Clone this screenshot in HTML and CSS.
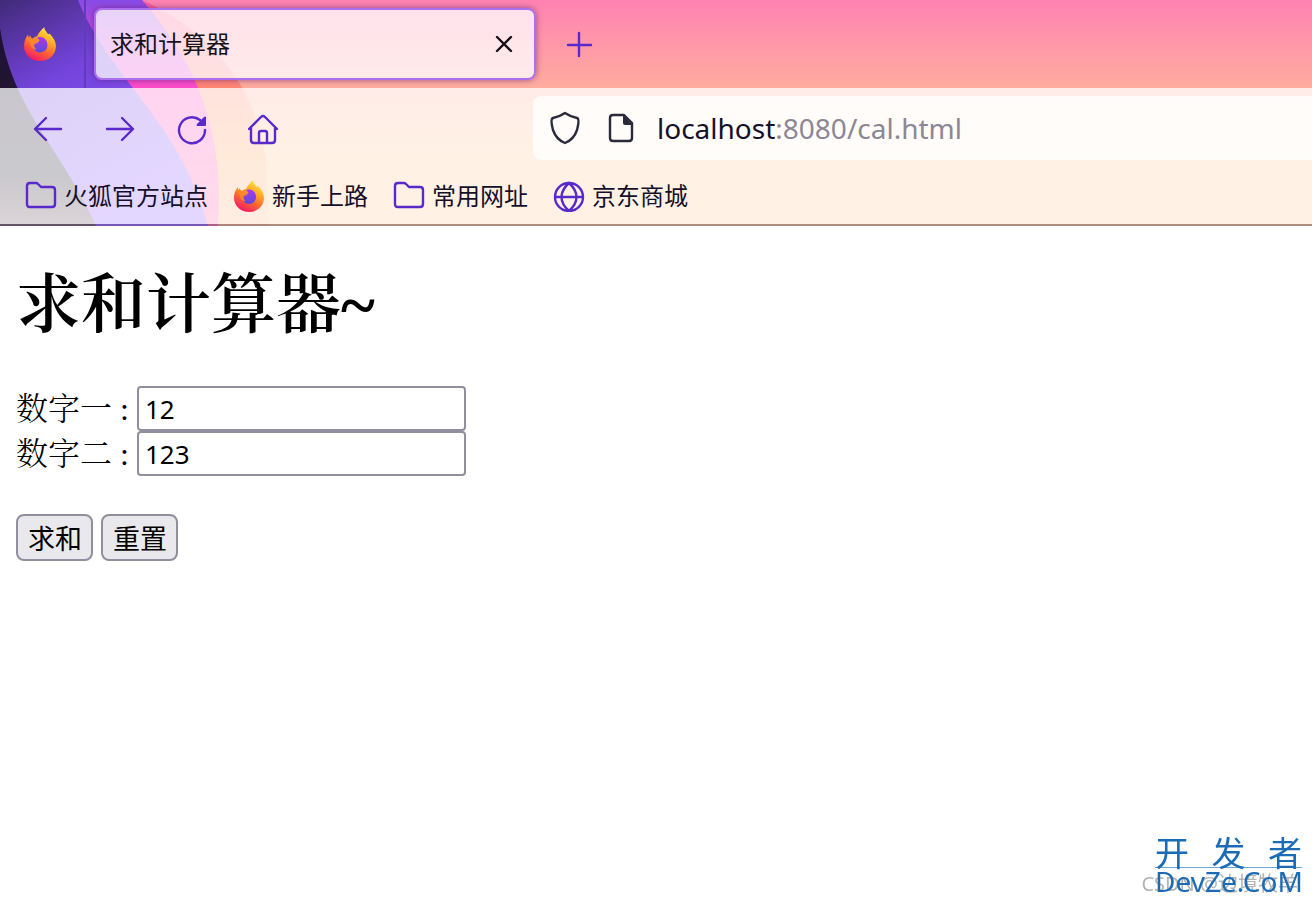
FILE: index.html
```html
<!DOCTYPE html>
<html lang="zh-CN">
<head>
<meta charset="utf-8">
<title>求和计算器</title>
<link rel="stylesheet" href="styles.css">
</head>
<body>
<svg class="defs" width="0" height="0" aria-hidden="true">
  <defs>
    <linearGradient id="fire" x1=".8" y1="0" x2=".3" y2="1">
      <stop offset="0" stop-color="#fff24a"/><stop offset=".35" stop-color="#ffab23"/><stop offset=".65" stop-color="#ff6430"/><stop offset="1" stop-color="#f4146b"/>
    </linearGradient>
    <linearGradient id="core" x1="0" y1="0" x2="0" y2="1">
      <stop offset="0" stop-color="#a83af0"/><stop offset="1" stop-color="#5b4ad8"/>
    </linearGradient>
    <symbol id="fox" viewBox="0 0 32 32">
      <path fill="url(#fire)" d="M20 0c0 3 2 4 3 6 1 1 2 1 2 0 4 4 6 8 6 12 0 8-7 14-15 14S1 26 1 18c0-4 1-8 4-11v3l2-2c0 2 1 2 2 3 2-2 4-2 4-2 2-4 4-6 7-9z"/>
      <path fill="url(#core)" d="M13 10c5-2 10 1 10 7 0 4-3 7-7 7s-6-3-6-6c0-2 1-3 3-4 2 0 3-1 2-2z"/>
      <path fill="#ff8a2c" d="M3 11c2-2 4 0 6 0l4-1-1 3c2 0 3 1 2 2l-3 1c-1 2 0 4 2 5-4 0-5-1-6-4 0-2-2-5-4-6z" opacity=".8"/>
    </symbol>
    <symbol id="folder" viewBox="0 0 32 32">
      <path fill="none" stroke="currentColor" stroke-width="2.4" stroke-linejoin="round" d="M5 3h6q1 0 2 1l3 3h11q3 0 3 3v14q0 3-3 3H5q-3 0-3-3V6q0-3 3-3z"/>
    </symbol>
  </defs>
</svg>
<header class="chrome">
  <svg class="theme" viewBox="0 0 320 226" aria-hidden="true">
    <defs>
      <linearGradient id="violet" x1="0" y1="0" x2=".5" y2="1"><stop offset="0" stop-color="#412a78"/><stop offset=".38" stop-color="#7544dd"/><stop offset="1" stop-color="#9059ff"/></linearGradient>
      <linearGradient id="magenta" x1="0" y1="0" x2="0" y2="1"><stop offset="0" stop-color="#884be5"/><stop offset=".2" stop-color="#d347df"/><stop offset=".4" stop-color="#ff4dc5"/><stop offset="1" stop-color="#ff66a6"/></linearGradient>
      <linearGradient id="amber" x1="0" y1="0" x2="0" y2="1"><stop offset="0" stop-color="#ff5c9f"/><stop offset=".4" stop-color="#ff8873"/><stop offset=".7" stop-color="#ffa866"/><stop offset="1" stop-color="#ffb58a"/></linearGradient>
      <linearGradient id="shade" x1="0" y1="0" x2="0" y2="1"><stop offset="0" stop-color="#1f0f35"/><stop offset=".75" stop-color="#24202f"/><stop offset="1" stop-color="#6b4e62"/></linearGradient>
    </defs>
    <path fill="url(#amber)" d="M0 0H142Q250 50 266 160L269 226H0z"/>
    <path fill="url(#magenta)" d="M0 0H142C195 60 225 130 218 226H0z"/>
    <path fill="url(#violet)" d="M0 0H78C110 80 180 120 208 226H0z"/>
    <path fill="url(#shade)" d="M0 28C12 110 60 145 96 226H0z"/>
  </svg>
  <div class="tabs">
    <button class="brand" aria-label="Firefox"><svg width="34" height="34"><use href="#fox"/></svg></button>
    <div class="tab"><span class="tab-title">求和计算器</span>
      <button class="plain" aria-label="关闭标签页"><svg width="20" height="20" viewBox="0 0 20 20"><path class="line" d="M3 3l14 14M17 3L3 17"/></svg></button>
    </div>
    <button class="plain accent" aria-label="新建标签页"><svg width="28" height="28" viewBox="0 0 28 28"><path class="line" d="M14 3v23M3 15h23"/></svg></button>
  </div>
  <div class="panel">
    <div class="toolbar">
      <nav class="nav accent">
        <button class="plain" aria-label="后退"><svg width="32" height="32" viewBox="0 0 32 32"><path class="line" d="M29 16H3M14 5L3 16l11 11"/></svg></button>
        <button class="plain" aria-label="前进"><svg width="32" height="32" viewBox="0 0 32 32"><path class="line" d="M3 16h26M18 5l11 11-11 11"/></svg></button>
        <button class="plain" aria-label="刷新"><svg width="32" height="32" viewBox="0 0 32 32"><path class="line" d="M29 17a13 13 0 1 1-5-10"/><path fill="currentColor" d="M30 4v8q0 1-1 1h-8q-1-1 0-2l7-7q1-1 2 0z"/></svg></button>
        <button class="plain" aria-label="主页"><svg width="32" height="32" viewBox="0 0 32 32"><path class="line" d="M1 16L13 4q2-2 4 0l12 12M3 15v12q0 3 3 3h18q3 0 3-3V15M11 30V20q0-2 2-2h4q2 0 2 2v10"/></svg></button>
      </nav>
      <div class="address">
        <svg width="32" height="34" viewBox="0 0 32 34"><path class="line" d="M16 2q6 4 12 5c3 1 1 8 0 12-2 6-7 11-12 13-5-2-10-7-12-13-1-4-3-11 0-12q6-1 12-5z"/></svg>
        <svg width="28" height="32" viewBox="0 0 28 32"><path class="line" d="M6 3h11l8 8v15q0 3-3 3H6q-3 0-3-3V6q0-3 3-3z"/><path fill="currentColor" d="M16 3l10 10H18q-2 0-2-2z"/></svg>
        <div class="url" role="textbox" aria-label="地址">localhost<span class="path">:8080/cal.html</span></div>
      </div>
    </div>
    <nav class="bookmarks">
      <a href="#"><svg class="accent" width="32" height="32"><use href="#folder"/></svg>火狐官方站点</a>
      <a href="#"><svg width="32" height="32"><use href="#fox"/></svg>新手上路</a>
      <a href="#"><svg class="accent" width="32" height="32"><use href="#folder"/></svg>常用网址</a>
      <a href="#"><svg class="accent" width="32" height="32" viewBox="0 0 32 32"><path class="line" d="M2 17a14 14 0 1 1 28 0a14 14 0 1 1-28 0zM2 17h28M16 3c-10 9-10 19 0 28M16 3c10 9 10 19 0 28"/></svg>京东商城</a>
    </nav>
  </div>
</header>
<main class="page">
  <h1>求和计算器~</h1>
  <form>
    <div class="row"><label for="n1">数字一 : </label><input id="n1" type="text" value="12"></div>
    <div class="row"><label for="n2">数字二 : </label><input id="n2" type="text" value="123"></div>
    <div class="actions"><button type="button">求和</button><button type="reset">重置</button></div>
  </form>
</main>
<aside class="mark">
  <div class="mark-cn"><span>开</span><span>发</span><span>者</span></div>
  <div class="mark-en">DevZe.CoM</div>
  <div class="credit">CSDN @边境牧羊</div>
</aside>
</body>
</html>
```

FILE: styles.css
```css
* { box-sizing: border-box; }
body {
  margin: 0;
  min-height: 100vh;
  background: #fff;
  color: #000;
  font-family: "Noto Sans", "Noto Sans CJK SC", sans-serif;
}
.defs { position: absolute; }
svg { display: block; flex: none; }
.line { fill: none; stroke: currentColor; stroke-width: 2.4; stroke-linecap: round; stroke-linejoin: round; }
.plain { display: flex; padding: 0; border: 0; background: none; color: inherit; }
.accent, .plain.accent { color: #5a29cc; }

.chrome {
  position: relative;
  overflow: hidden;
  color: #15141a;
  background: linear-gradient(#ff82b2 0, #ffac9e 88px, #ffc993 160px, #ffc993 100%);
}
.theme { position: absolute; left: 0; top: 0; width: 320px; height: 226px; }
.tabs { position: relative; display: flex; align-items: center; height: 88px; }
.brand {
  display: flex;
  align-self: stretch;
  align-items: center;
  width: 86px;
  padding: 0 0 0 23px;
  border: 0;
  border-right: 2px solid #633bb8;
  background: none;
}
.tab {
  display: flex;
  align-items: center;
  justify-content: space-between;
  width: 442px;
  height: 72px;
  margin: 0 29px 0 8px;
  padding: 0 20px 0 14px;
  border: 2px solid #ac70ee;
  border-radius: 8px;
  background: rgba(255, 255, 255, .76);
  box-shadow: 0 0 6px rgba(80, 30, 110, .6);
}
.tab-title { font-size: 24px; line-height: 32px; }
.panel {
  position: relative;
  border-bottom: 2px solid rgba(91, 83, 103, .5);
  background: rgba(255, 255, 255, .76);
  background-clip: padding-box;
}
.toolbar { display: flex; align-items: center; height: 80px; }
.nav { display: flex; gap: 40px; width: 533px; padding: 2px 0 0 32px; }
.address {
  display: flex;
  flex: 1;
  align-items: center;
  height: 64px;
  padding-left: 16px;
  border-radius: 8px 0 0 8px;
  background: rgba(255, 255, 255, .8);
  color: #2b2a3a;
}
.address svg + svg { margin: 0 22px 0 26px; }
.url { color: #15102a; font-size: 28px; line-height: 40px; }
.path { color: #8b8794; }
.bookmarks { display: flex; gap: 25px; height: 56px; padding: 0 25px; }
.bookmarks a {
  display: flex;
  align-items: center;
  gap: 7px;
  color: #15102a;
  font-size: 24px;
  line-height: 32px;
  text-decoration: none;
}

.page { padding: 32px 16px; }
h1 {
  margin: 0 0 34px;
  font: 600 65px/94px "Liberation Serif", "Noto Serif CJK SC", "Noto Sans CJK SC", serif;
}
.row {
  display: flex;
  align-items: center;
  font: 300 32px/44px "Liberation Serif", "Noto Serif CJK SC", "Noto Sans CJK SC", serif;
}
label { width: 121px; white-space: pre; }
.row input {
  width: 329px;
  height: 45px;
  padding: 0 6px;
  border: 2px solid #8f8f9d;
  border-radius: 4px;
  font: 26px/36px "Noto Sans", sans-serif;
}
.actions { display: flex; gap: 8px; margin-top: 38px; }
.actions button {
  height: 47px;
  padding: 0 9px 0 10px;
  border: 2px solid #8f8f9d;
  border-radius: 8px;
  background: #e9e9ed;
  color: #000;
  font: 27px/36px "Noto Sans CJK SC", sans-serif;
}

.mark { position: fixed; right: 10px; bottom: 8px; width: 147px; color: #1c6bb5; }
.mark-cn {
  display: flex;
  justify-content: space-between;
  border-bottom: 1px solid #69a5d5;
  font-size: 34px;
  line-height: 28px;
}
.mark-en { position: relative; z-index: 1; font-size: 28px; line-height: 26px; white-space: nowrap; }
.credit {
  position: absolute;
  right: 4px;
  bottom: 0;
  color: #b4b4b4;
  font-size: 20px;
  line-height: 20px;
  white-space: nowrap;
}
```
